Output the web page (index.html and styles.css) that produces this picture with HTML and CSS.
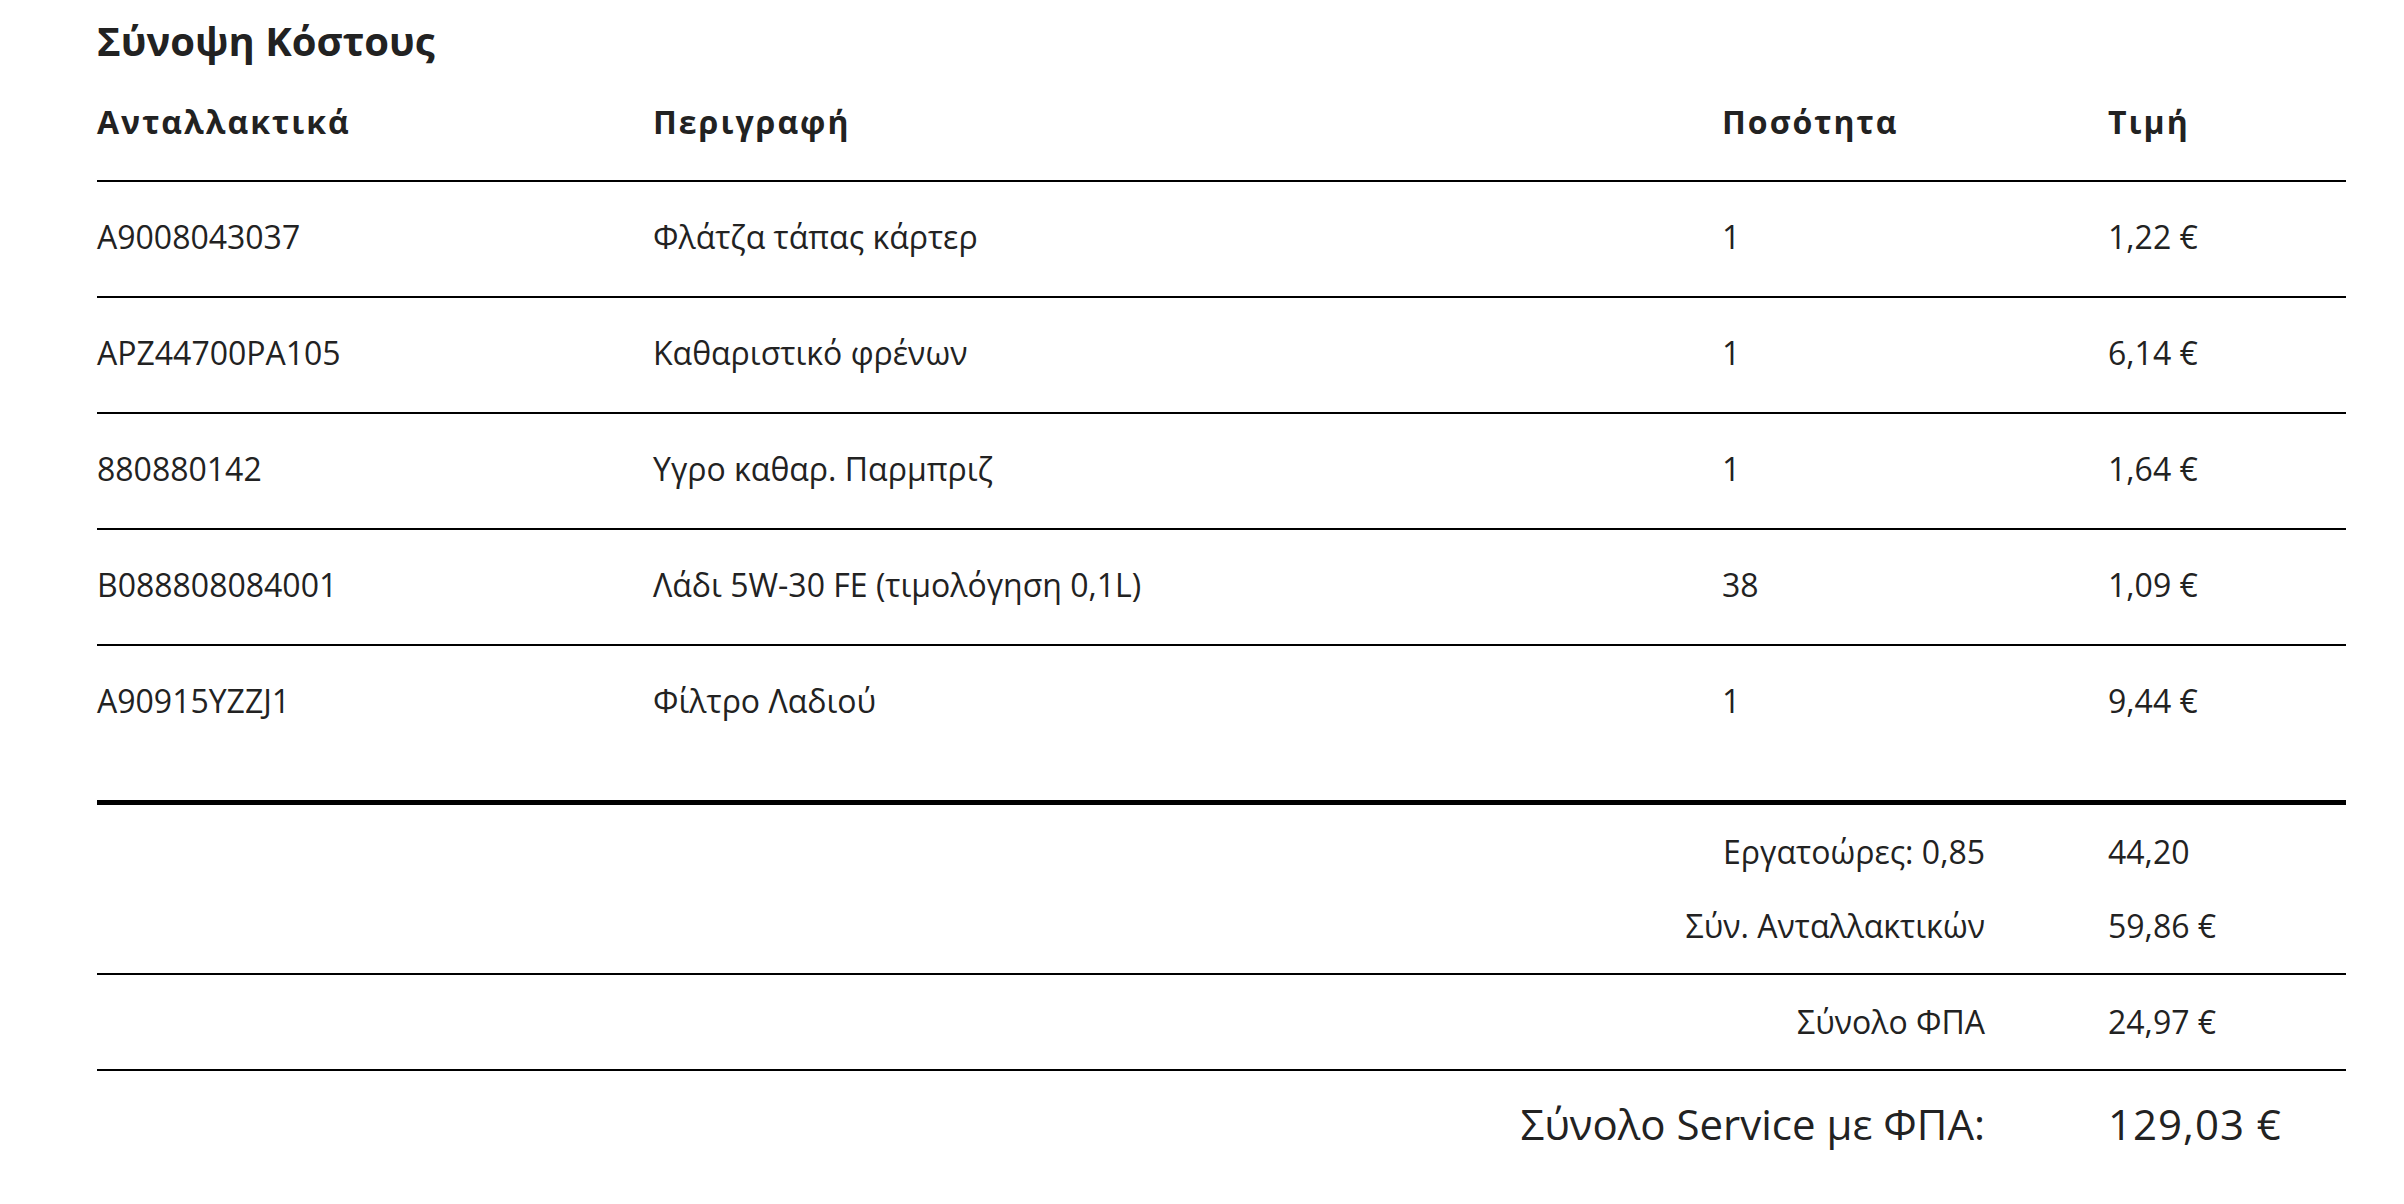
FILE: index.html
```html
<!DOCTYPE html>
<html lang="el">
<head>
<meta charset="utf-8">
<title>Σύνοψη Κόστους</title>
<link rel="stylesheet" href="styles.css">
</head>
<body>
<main class="summary-page">
  <h2 class="title">Σύνοψη Κόστους</h2>
  <table class="parts">
    <colgroup>
      <col class="c-code">
      <col class="c-desc">
      <col class="c-qty">
      <col class="c-price">
    </colgroup>
    <thead>
      <tr>
        <th>Ανταλλακτικά</th>
        <th>Περιγραφή</th>
        <th>Ποσότητα</th>
        <th>Τιμή</th>
      </tr>
    </thead>
    <tbody>
      <tr><td>A9008043037</td><td>Φλάτζα τάπας κάρτερ</td><td>1</td><td>1,22 €</td></tr>
      <tr><td>APZ44700PA105</td><td>Καθαριστικό φρένων</td><td>1</td><td>6,14 €</td></tr>
      <tr><td>880880142</td><td>Υγρο καθαρ. Παρμπριζ</td><td>1</td><td>1,64 €</td></tr>
      <tr><td>B088808084001</td><td>Λάδι 5W-30 FE (τιμολόγηση 0,1L)</td><td>38</td><td>1,09 €</td></tr>
      <tr><td>A90915YZZJ1</td><td>Φίλτρο Λαδιού</td><td>1</td><td>9,44 €</td></tr>
    </tbody>
  </table>

  <section class="totals">
    <div class="group">
      <div class="row"><span class="label">Εργατοώρες: 0,85</span><span class="value">44,20</span></div>
      <div class="row"><span class="label">Σύν. Ανταλλακτικών</span><span class="value">59,86 €</span></div>
    </div>
    <div class="group">
      <div class="row"><span class="label">Σύνολο ΦΠΑ</span><span class="value">24,97 €</span></div>
    </div>
    <div class="grand">
      <span class="label">Σύνολο Service με ΦΠΑ:</span><span class="value">129,03 €</span>
    </div>
  </section>
</main>
</body>
</html>
```

FILE: styles.css
```css
html, body {
  margin: 0;
  padding: 0;
  background: #ffffff;
}

body {
  font-family: "Open Sans", "Noto Sans", sans-serif;
  color: #222222;
}

.summary-page {
  width: 2249px;
  margin-left: 97px;
  padding-top: 13px;
}

.title {
  margin: 0;
  font-size: 40px;
  font-weight: 700;
  line-height: normal;
  color: #222222;
}

.parts {
  width: 100%;
  border-collapse: collapse;
  table-layout: fixed;
}

.c-code { width: 556px; }
.c-desc { width: 1069px; }
.c-qty { width: 386px; }
.c-price { width: 238px; }

.parts th {
  text-align: left;
  font-size: 32px;
  font-weight: 700;
  letter-spacing: 2px;
  line-height: normal;
  padding: 32px 0 37px 0;
  border-bottom: 2px solid #000000;
  color: #222222;
}

.parts td {
  font-size: 32px;
  font-weight: 400;
  line-height: 44px;
  padding: 33px 0 37px 0;
  border-bottom: 2px solid #000000;
  white-space: nowrap;
}

.parts tbody tr:last-child td {
  border-bottom: none;
}

.totals {
  margin-top: 40px;
  border-top: 5px solid #000000;
}

.group {
  padding: 10px 0;
  border-bottom: 2px solid #000000;
}

.row,
.grand {
  display: grid;
  grid-template-columns: 1fr 238px;
}

.row {
  font-size: 32px;
  line-height: 44px;
  padding: 15px 0;
}

.label {
  text-align: right;
  padding-right: 123px;
}

.grand {
  font-size: 42px;
  line-height: 56px;
  padding-top: 25px;
}

.grand .value {
  letter-spacing: 1px;
}
```
